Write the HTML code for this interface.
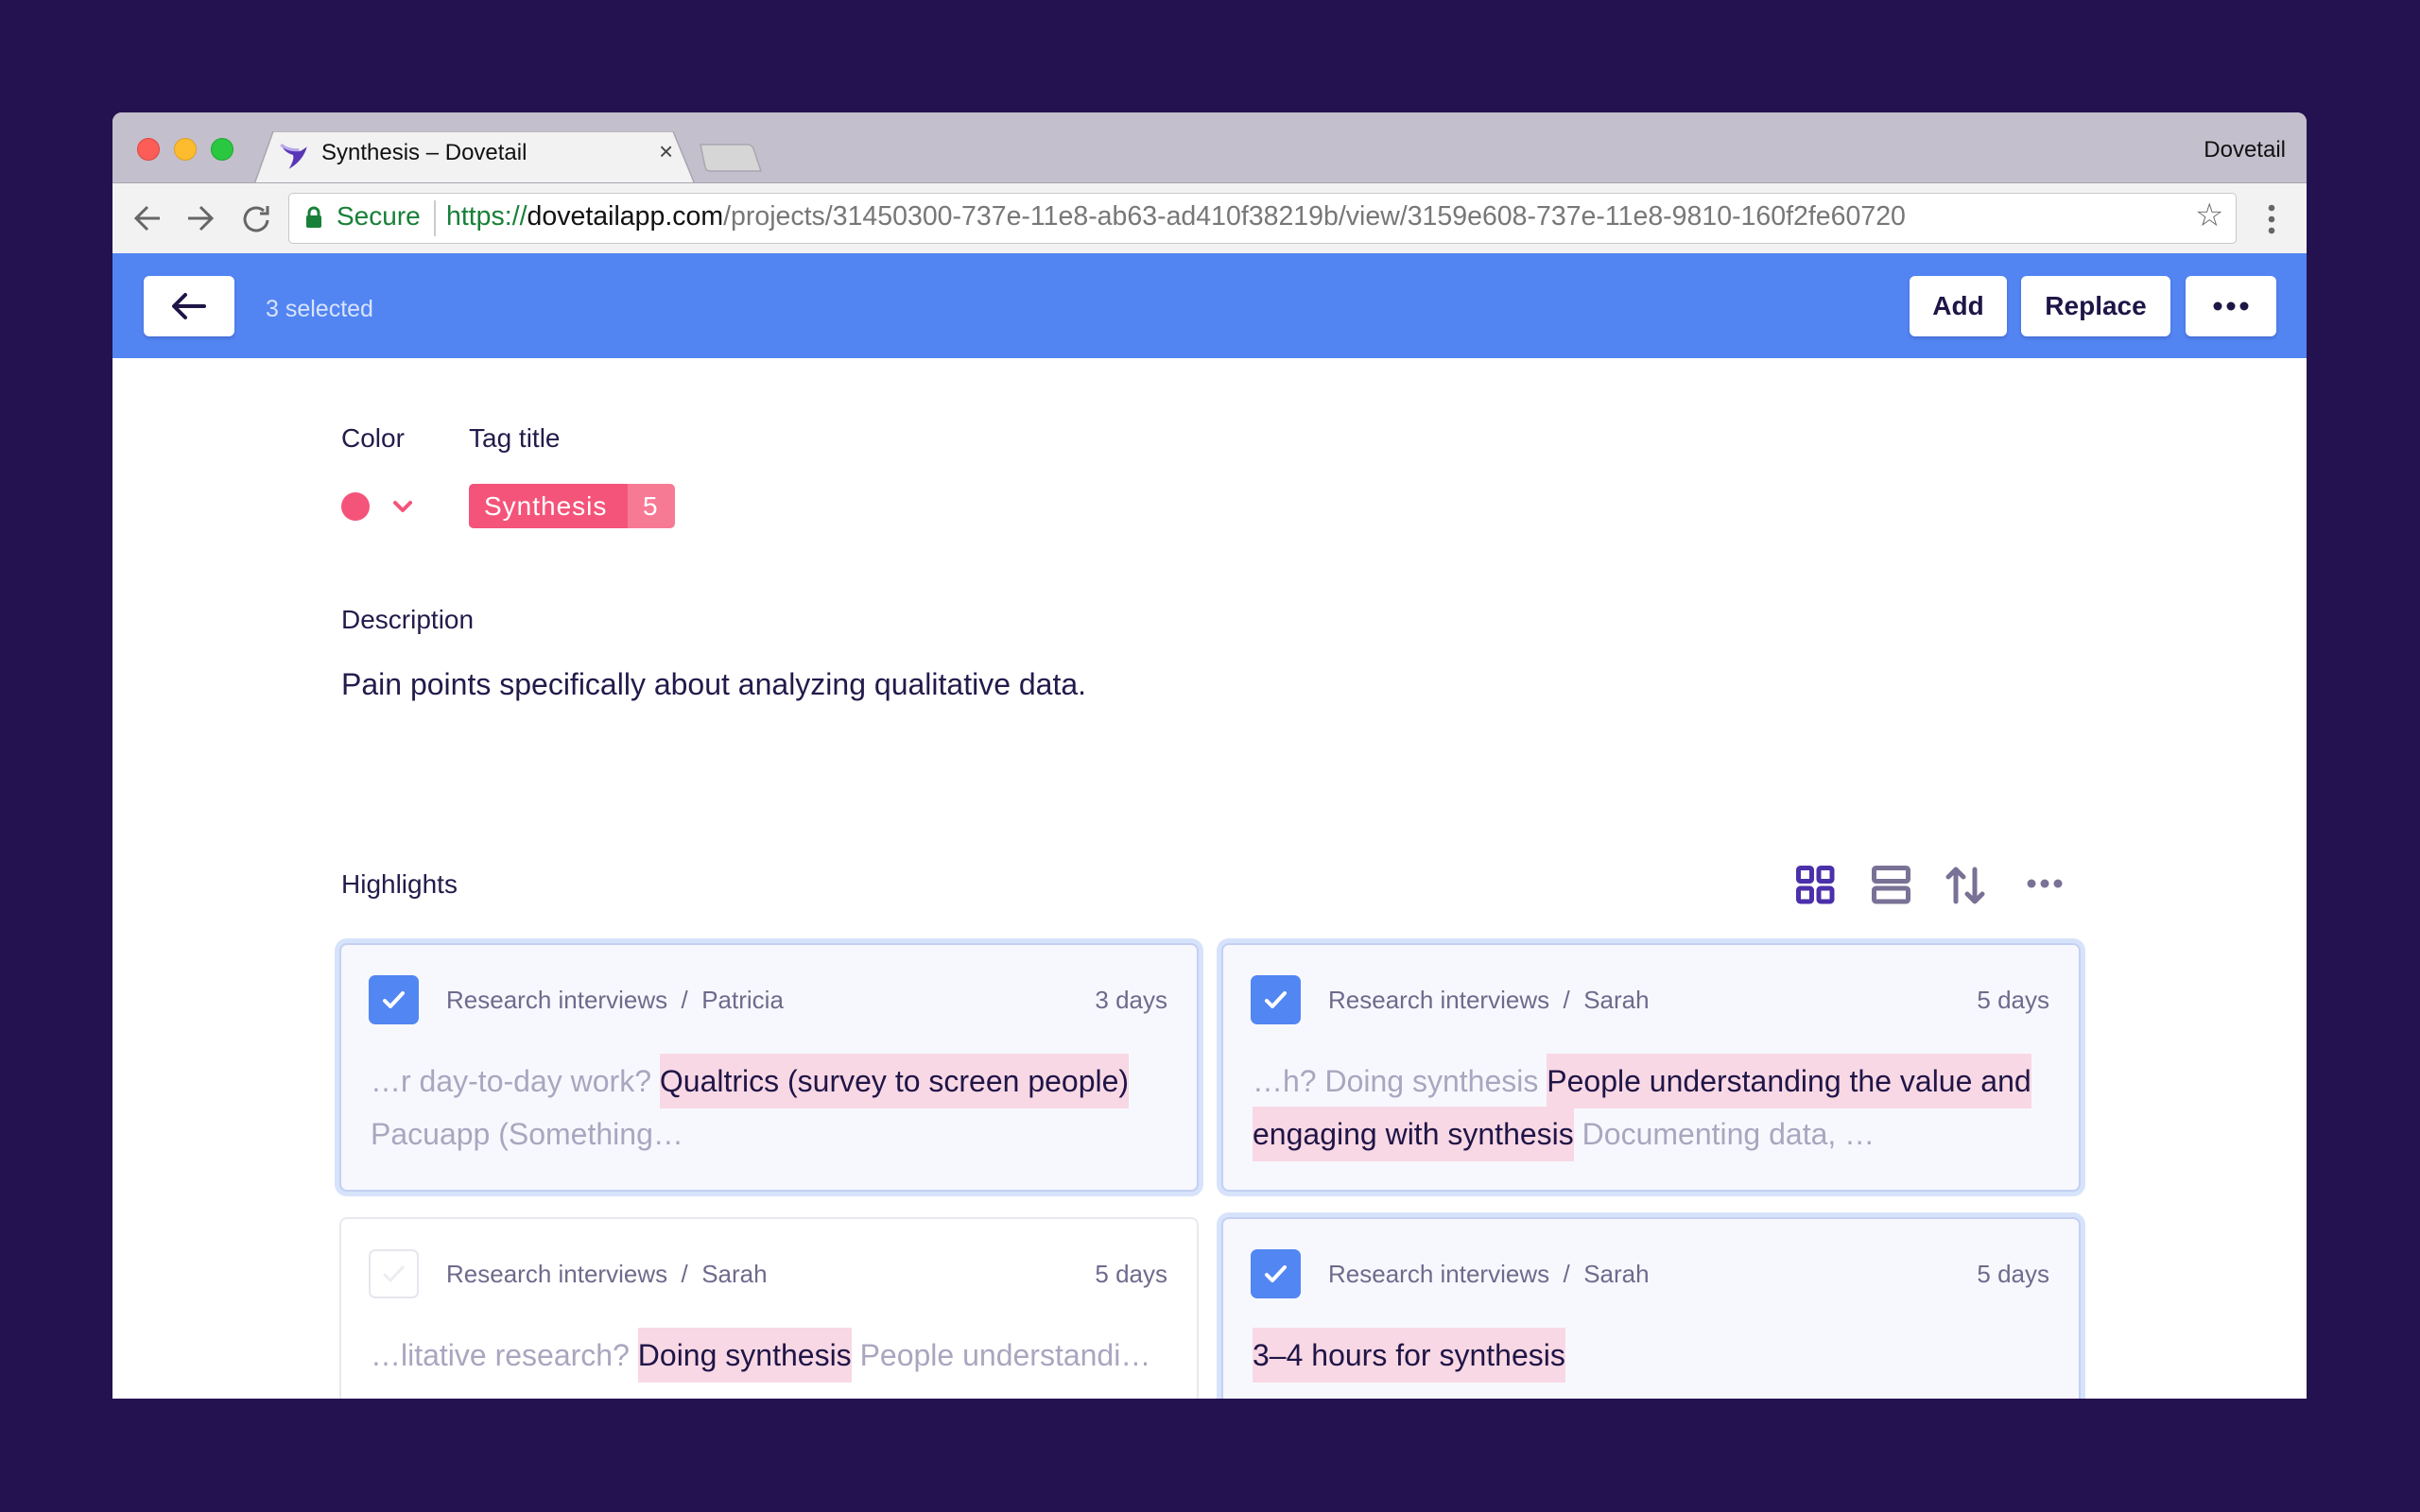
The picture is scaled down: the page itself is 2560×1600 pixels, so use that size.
<!DOCTYPE html>
<html><head><meta charset="utf-8"><style>
*{margin:0;padding:0;box-sizing:border-box}
body{width:2560px;height:1600px;background:#24114f;font-family:"Liberation Sans",sans-serif;position:relative;overflow:hidden}
.a{position:absolute}
.win{left:119px;top:119px;width:2321px;height:1361px;background:#fff;border-radius:10px 10px 0 0;overflow:hidden}
.tabbar{left:0;top:0;width:100%;height:74px;background:#c3bfcc}
.tl{width:24px;height:24px;border-radius:50%;top:27px}
.toolbar{left:0;top:74px;width:100%;height:75px;background:#f2f2f2;border-top:1px solid #a9a6b0}
.blue{left:0;top:149px;width:100%;height:111px;background:#5285f2}
.btn{background:#fff;border-radius:6px;top:24px;height:64px;color:#1f1547;font-size:28px;font-weight:bold;display:flex;align-items:center;justify-content:center;box-shadow:0 2px 3px rgba(30,40,120,.25)}
.lbl{color:#241a4b;font-size:28px}
.card{width:909px;height:263px;border:2px solid #e8e8ef;border-radius:8px;background:#fff}
.sel{background:#f7f8fe;border-color:#c3d0f2;box-shadow:0 0 0 5px #d7e3fb}
.cb{left:29px;top:32px;width:53px;height:52px;border-radius:7px;background:#5286f2}
.cb.off{background:#fff;border:2px solid #e6e6ee}
.meta{top:43px;font-size:26px;color:#6f6a8c;left:111px;white-space:pre}
.days{top:43px;font-size:26px;color:#6f6a8c;right:31px}
.body{left:31px;top:116px;font-size:32px;line-height:56px;color:#a9a6bf;white-space:nowrap}
.hl{background:#f8d8e4;color:#1f1547;padding:11px 0}
</style></head><body>
<div class="a win">
 <div class="a tabbar">
  <div class="a tl" style="left:26px;background:#fc5d57;border:1px solid #e0443e"></div>
  <div class="a tl" style="left:65px;background:#fdbc2e;border:1px solid #dea123"></div>
  <div class="a tl" style="left:104px;background:#2ac840;border:1px solid #1ca92f"></div>
  <svg class="a" style="left:150px;top:20px" width="470" height="56"><path d="M0 56 L20 0 H443 L466 56 Z" fill="#f2f2f2" stroke="#a9a6b0" stroke-width="1.5"/></svg>
  <svg class="a" style="left:176px;top:30px" width="34" height="34" viewBox="0 0 32 32"><path d="M2 4 Q12 12 22 10 L28 6 Q24 20 10 28 Q16 18 14 14 Q6 12 2 4Z" fill="#5a35b8"/><path d="M2 4 Q10 10 20 9" stroke="#b9a6ea" stroke-width="3" fill="none"/></svg>
  <div class="a" style="left:221px;top:29px;font-size:24px;color:#111">Synthesis – Dovetail</div>
  <div class="a" style="left:578px;top:26px;font-size:26px;color:#444">×</div>
  <svg class="a" style="left:620px;top:32px" width="70" height="34"><path d="M2 2 H52 Q56 2 58 6 L66 30 H12 Q8 30 7 26 Z" fill="#d6d6d6" stroke="#a9a6b0" stroke-width="1.5"/></svg>
  <div class="a" style="right:22px;top:26px;font-size:24px;color:#111">Dovetail</div>
 </div>
 <div class="a toolbar">
  <svg class="a" style="left:22px;top:20px" width="180" height="34" fill="none" stroke="#666" stroke-width="3"><path d="M28 17H4M15 5 3 17 15 29"/><path d="M58 17H82M71 5 83 17 71 29"/><path d="M138 9a12 12 0 1 0 4 10" /><path d="M142 4v8h-8"/></svg>
  <div class="a" style="left:186px;top:10px;width:2061px;height:54px;background:#fff;border:1.5px solid #c8c8c8;border-radius:5px"></div>
  <svg class="a" style="left:204px;top:24px" width="18" height="24"><rect x="1" y="10" width="16" height="13" rx="2" fill="#188038"/><path d="M4 11V7a5 5 0 0 1 10 0v4" stroke="#188038" stroke-width="3" fill="none"/></svg>
  <div class="a" style="left:237px;top:19px;font-size:28px;color:#188038">Secure</div>
  <div class="a" style="left:340px;top:18px;width:1.5px;height:38px;background:#ccc"></div>
  <div class="a" style="left:353px;top:19px;font-size:28.5px;color:#777;white-space:nowrap"><span style="color:#188038">https://</span><span style="color:#111">dovetailapp.com</span>/projects/31450300-737e-11e8-ab63-ad410f38219b/view/3159e608-737e-11e8-9810-160f2fe60720</div>
  <div class="a" style="left:2203px;top:14px;font-size:34px;color:#666">☆</div>
  <svg class="a" style="left:2279px;top:22px" width="10" height="32" fill="#666"><circle cx="5" cy="4" r="3.3"/><circle cx="5" cy="16" r="3.3"/><circle cx="5" cy="28" r="3.3"/></svg>
 </div>
 <div class="a blue">
  <div class="a btn" style="left:33px;width:96px"><svg width="40" height="30" fill="none" stroke="#1f1547" stroke-width="4" stroke-linecap="round" stroke-linejoin="round"><path d="M36 15H5M16 3 4 15 16 27"/></svg></div>
  <div class="a" style="left:162px;top:45px;font-size:25px;color:#d8e3fc">3 selected</div>
  <div class="a btn" style="left:1901px;width:103px">Add</div>
  <div class="a btn" style="left:2019px;width:158px">Replace</div>
  <div class="a btn" style="left:2193px;width:96px"><svg width="40" height="10" fill="#1f1547"><circle cx="6" cy="5" r="4.5"/><circle cx="20" cy="5" r="4.5"/><circle cx="34" cy="5" r="4.5"/></svg></div>
 </div>
 <div class="a lbl" style="left:242px;top:329px">Color</div>
 <div class="a lbl" style="left:377px;top:329px">Tag title</div>
 <div class="a" style="left:242px;top:402px;width:30px;height:30px;border-radius:50%;background:#f4547a"></div>
 <svg class="a" style="left:296px;top:410px" width="22" height="14" fill="none" stroke="#f4547a" stroke-width="4" stroke-linecap="round" stroke-linejoin="round"><path d="M3 3 11 11 19 3"/></svg>
 <div class="a" style="left:377px;top:393px;width:218px;height:47px;border-radius:5px;background:#f77a95;overflow:hidden">
  <div class="a" style="left:0;top:0;width:168px;height:47px;background:#f4547a"></div>
  <div class="a" style="left:16px;top:8px;font-size:28px;color:#fff;letter-spacing:1px">Synthesis</div>
  <div class="a" style="left:184px;top:8px;font-size:28px;color:#fff">5</div>
 </div>
 <div class="a lbl" style="left:242px;top:521px">Description</div>
 <div class="a" style="left:242px;top:587px;font-size:32px;color:#241a4b">Pain points specifically about analyzing qualitative data.</div>
 <div class="a lbl" style="left:242px;top:801px">Highlights</div>
 <svg class="a" style="left:1781px;top:797px" width="300" height="42" fill="none" stroke-width="5">
  <g stroke="#4b30ab"><rect x="2.5" y="2.5" width="14" height="14" rx="2"/><rect x="24" y="2.5" width="14" height="14" rx="2"/><rect x="2.5" y="24" width="14" height="14" rx="2"/><rect x="24" y="24" width="14" height="14" rx="2"/></g>
  <g stroke="#7a7196" stroke-linecap="round" stroke-linejoin="round"><rect x="82.5" y="2.5" width="36" height="14" rx="2"/><rect x="82.5" y="24" width="36" height="14" rx="2"/>
  <path d="M169 38V4M161 12 169 4 177 12M189 4V38M181 30 189 38 197 30"/></g>
  <g fill="#7a7196"><circle cx="249" cy="19" r="4.5"/><circle cx="263" cy="19" r="4.5"/><circle cx="277" cy="19" r="4.5"/></g>
 </svg>

 <div class="a card sel" style="left:240px;top:879px">
  <div class="a cb"><svg width="53" height="52" fill="none" stroke="#fff" stroke-width="4" stroke-linecap="round" stroke-linejoin="round"><path d="M17 27 23 33 36 19"/></svg></div>
  <div class="a meta">Research interviews  /  Patricia</div><div class="a days">3 days</div>
  <div class="a body">…r day-to-day work? <span class="hl">Qualtrics (survey to screen people)</span><br>Pacuapp (Something…</div>
 </div>
 <div class="a card sel" style="left:1173px;top:879px">
  <div class="a cb"><svg width="53" height="52" fill="none" stroke="#fff" stroke-width="4" stroke-linecap="round" stroke-linejoin="round"><path d="M17 27 23 33 36 19"/></svg></div>
  <div class="a meta">Research interviews  /  Sarah</div><div class="a days">5 days</div>
  <div class="a body">…h? Doing synthesis <span class="hl">People understanding the value and</span><br><span class="hl">engaging with synthesis</span> Documenting data, …</div>
 </div>
 <div class="a card" style="left:240px;top:1169px">
  <div class="a cb off"><svg width="49" height="48" fill="none" stroke="#ececf2" stroke-width="3" stroke-linecap="round" stroke-linejoin="round"><path d="M15 25 21 31 34 17"/></svg></div>
  <div class="a meta">Research interviews  /  Sarah</div><div class="a days">5 days</div>
  <div class="a body">…litative research? <span class="hl">Doing synthesis</span> People understandi…</div>
 </div>
 <div class="a card sel" style="left:1173px;top:1169px">
  <div class="a cb"><svg width="53" height="52" fill="none" stroke="#fff" stroke-width="4" stroke-linecap="round" stroke-linejoin="round"><path d="M17 27 23 33 36 19"/></svg></div>
  <div class="a meta">Research interviews  /  Sarah</div><div class="a days">5 days</div>
  <div class="a body"><span class="hl">3–4 hours for synthesis</span></div>
 </div>
</div>
</body></html>
